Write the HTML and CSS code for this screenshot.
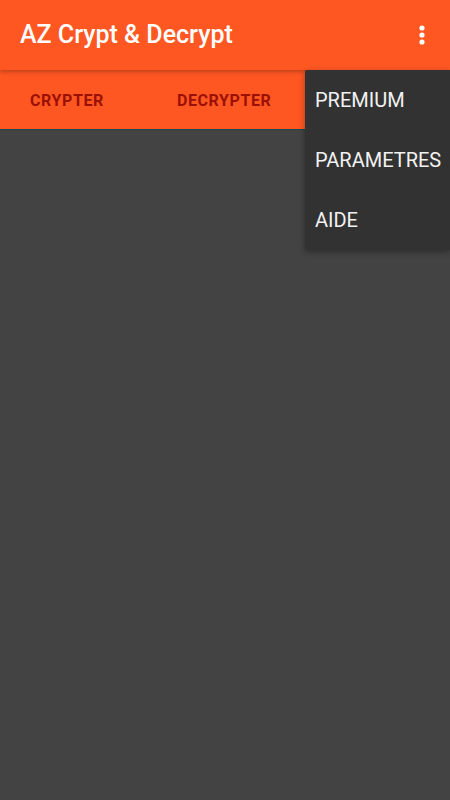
FILE: index.html
```html
<!DOCTYPE html>
<html lang="fr">
<head>
<meta charset="utf-8"/>
<meta content="width=device-width, initial-scale=1.0" name="viewport"/>
<title>AZ Crypt &amp; Decrypt</title>
<link rel="stylesheet" href="styles.css">
</head>
<body>
<div class="app">
  <header class="toolbar">
    <h1 class="title">AZ Crypt &amp; Decrypt</h1>
    <button class="overflow" aria-label="Plus d'options">
      <svg width="6" height="22" viewBox="0 0 6 22">
        <circle cx="3" cy="4" r="2.6" fill="#fff"/>
        <circle cx="3" cy="11" r="2.6" fill="#fff"/>
        <circle cx="3" cy="18" r="2.6" fill="#fff"/>
      </svg>
    </button>
  </header>
  <nav class="tabs">
    <div class="tab tab-crypt">CRYPTER</div>
    <div class="tab tab-decrypt">DECRYPTER</div>
  </nav>
  <main class="content"></main>

  <ul class="menu">
    <li>PREMIUM</li>
    <li>PARAMETRES</li>
    <li>AIDE</li>
  </ul>
</div>
</body>
</html>
```

FILE: styles.css
```css
* {
  box-sizing: border-box;
}

html, body {
  margin: 0;
  height: 100%;
}

body {
  font-family: Roboto, "Noto Sans", sans-serif;
  background: #434343;
}

.app {
  position: relative;
  display: flex;
  flex-direction: column;
  height: 800px;
}

.toolbar {
  position: relative;
  z-index: 2;
  height: 70px;
  background: #ff5722;
  display: flex;
  align-items: center;
  justify-content: space-between;
  padding: 0 25px 0 20px;
  box-shadow: 0 2px 4px rgba(0,0,0,0.25);
}

.title {
  margin: 0;
  color: white;
  font-size: 25px;
  font-weight: 500;
  padding-bottom: 1px;
}

.overflow {
  background: none;
  border: none;
  padding: 0;
  display: flex;
  margin-top: -1px;
}

.tabs {
  height: 60px;
  background: #ff5722;
  display: flex;
  align-items: center;
  border-bottom: 1px solid #1e4650;
}

.tab {
  color: #9b1005;
  font-size: 16px;
  font-weight: 700;
  letter-spacing: 0.6px;
  padding-top: 1px;
}

.tab-crypt {
  margin-left: 30px;
}

.tab-decrypt {
  margin-left: 73px;
}

.content {
  flex: 1;
  background: #434343;
}

.menu {
  position: absolute;
  z-index: 3;
  top: 70px;
  right: 0;
  width: 145px;
  margin: 0;
  padding: 0;
  list-style: none;
  background: #323232;
  border-radius: 2px 0 0 2px;
  box-shadow: 0 2px 6px rgba(0,0,0,0.35);
}

.menu li {
  height: 60px;
  display: flex;
  align-items: center;
  padding-left: 10px;
  color: #f2f2f2;
  font-size: 20px;
  white-space: nowrap;
}
```
